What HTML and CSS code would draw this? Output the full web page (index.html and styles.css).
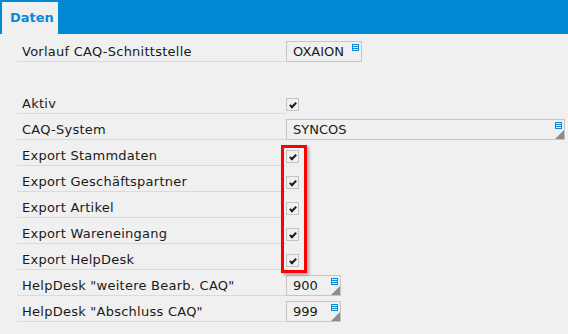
FILE: index.html
```html
<!DOCTYPE html>
<html lang="de">
<head>
<meta charset="UTF-8">
<meta name="viewport" content="width=device-width, initial-scale=1.0">
<title>Daten</title>
<link rel="stylesheet" href="styles.css">
</head>
<body>

<div class="tabbar">
  <div class="tab">Daten</div>
</div>

<div class="form">
  <div class="row">
    <span class="label">Vorlauf CAQ-Schnittstelle</span>
    <div class="value"><div class="field short">OXAION<i class="list-icon"></i></div></div>
  </div>
  <div class="row empty"></div>
  <div class="row">
    <span class="label">Aktiv</span>
    <div class="value"><span class="check"></span></div>
  </div>
  <div class="row">
    <span class="label">CAQ-System</span>
    <div class="value"><div class="field wide">SYNCOS<i class="list-icon"></i><i class="corner"></i></div></div>
  </div>
  <div class="row">
    <span class="label">Export Stammdaten</span>
    <div class="value"><span class="check"></span></div>
  </div>
  <div class="row">
    <span class="label">Export Geschäftspartner</span>
    <div class="value"><span class="check"></span></div>
  </div>
  <div class="row">
    <span class="label">Export Artikel</span>
    <div class="value"><span class="check"></span></div>
  </div>
  <div class="row">
    <span class="label">Export Wareneingang</span>
    <div class="value"><span class="check"></span></div>
  </div>
  <div class="row">
    <span class="label">Export HelpDesk</span>
    <div class="value"><span class="check"></span></div>
  </div>
  <div class="row">
    <span class="label">HelpDesk "weitere Bearb. CAQ"</span>
    <div class="value"><div class="field num">900<i class="list-icon"></i><i class="corner"></i></div></div>
  </div>
  <div class="row">
    <span class="label">HelpDesk "Abschluss CAQ"</span>
    <div class="value"><div class="field num">999<i class="list-icon"></i><i class="corner"></i></div></div>
  </div>

  <div class="highlight"></div>
</div>

</body>
</html>
```

FILE: styles.css
```css
body {
  margin: 0;
  background-color: #f0f0f0;
  font-family: 'DejaVu Sans', Verdana, sans-serif;
  font-size: 13px;
  color: #1a1a1a;
}
.tabbar {
  background-color: #0089d2;
  height: 34px;
  padding: 2px 0 0 2px;
  box-sizing: border-box;
}
.tab {
  background-color: #f0f0f0;
  width: 56px;
  height: 32px;
  padding-left: 8px;
  box-sizing: border-box;
  color: #0a8ad6;
  font-weight: bold;
  font-size: 13px;
  line-height: 32px;
}
.form {
  position: relative;
  padding: 2px 0 0 17px;
}
.row {
  display: grid;
  grid-template-columns: 269px 1fr;
  height: 26px;
}
.label {
  display: flex;
  align-items: center;
  padding: 6px 0 0 5px;
  border-bottom: 1px solid #dadada;
  box-sizing: border-box;
  letter-spacing: 0.25px;
}
.empty .label {
  border: none;
}
.value {
  display: flex;
  align-items: flex-end;
}
.field {
  position: relative;
  height: 21px;
  border: 1px solid #c6c6c6;
  box-sizing: border-box;
  padding-left: 6px;
  font-size: 13px;
  line-height: 20px;
}
.short {
  width: 76px;
}
.wide {
  width: 279px;
}
.num {
  width: 55px;
}
.list-icon {
  position: absolute;
  top: 2px;
  right: 2px;
  width: 7px;
  height: 7px;
  border: 1px solid #0a8ad6;
  box-sizing: border-box;
  background: linear-gradient(#0a8ad6, #0a8ad6) 0 1px / 100% 1px no-repeat,
              linear-gradient(#0a8ad6, #0a8ad6) 0 3px / 100% 1px no-repeat;
}
.corner {
  position: absolute;
  right: 0;
  bottom: 0;
  width: 0;
  height: 0;
  border-style: solid;
  border-width: 0 0 9px 9px;
  border-color: transparent transparent #8c8c8c transparent;
}
.check {
  width: 13px;
  height: 13px;
  border: 1px solid #c3c3c3;
  box-sizing: border-box;
  margin-bottom: 3px;
  position: relative;
}
.check::after {
  content: "";
  position: absolute;
  left: 4px;
  top: 2px;
  width: 2px;
  height: 5px;
  border: solid #1a1a1a;
  border-width: 0 2px 2px 0;
  transform: rotate(45deg);
}
.highlight {
  position: absolute;
  left: 281px;
  top: 111px;
  width: 26px;
  height: 128px;
  border: 3px solid #ff0000;
  box-sizing: border-box;
  box-shadow: 2px 2px 3px rgba(0, 0, 0, 0.3);
}
```
